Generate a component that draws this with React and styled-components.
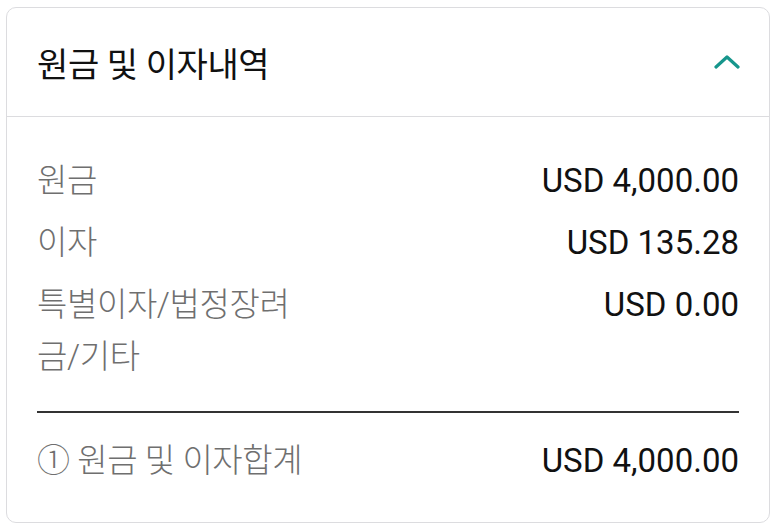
import React from "react";
import styled, { createGlobalStyle } from "styled-components";

const Global = createGlobalStyle`
  html, body { margin: 0; padding: 0; background: #fff; }
  body { font-family: Roboto, "Noto Sans CJK KR", sans-serif; }
`;

const Card = styled.section`
  box-sizing: border-box;
  margin: 7px 0 0 6px;
  width: 764px;
  height: 516px;
  border: 1.5px solid #dcdcdf;
  border-radius: 10px;
  background: #fff;
  overflow: hidden;
`;

const Header = styled.div`
  box-sizing: border-box;
  height: 109px;
  display: flex;
  align-items: center;
  justify-content: space-between;
  padding: 0 29px 0 30px;
  border-bottom: 1.5px solid #dcdcdf;
`;

const Title = styled.h2`
  margin: 0;
  font-size: 34px;
  font-weight: 400;
  color: #111;
  letter-spacing: -0.4px;
`;

const Body = styled.div`
  padding: 38px 30px 0 30px;
`;

const Row = styled.div`
  display: flex;
  justify-content: space-between;
  align-items: flex-start;
  margin-bottom: ${(p) => (p.last ? "0" : "10px")};
`;

const Label = styled.div`
  max-width: 266px;
  font-size: 33px;
  font-weight: 300;
  line-height: 52px;
  color: #6f6f6f;
  letter-spacing: -0.4px;
  word-break: break-all;
`;

const Value = styled.div`
  font-size: 33px;
  line-height: 52px;
  color: #111;
  white-space: nowrap;
`;

const Divider = styled.hr`
  margin: 28px 0 22px;
  border: none;
  height: 1.5px;
  background: #333;
`;

function Chevron() {
  return (
    <svg width="26" height="16" viewBox="0 0 26 16">
      <path
        d="M2 13 L13 3 L24 13"
        fill="none"
        stroke="#16968c"
        strokeWidth="3.2"
        strokeLinecap="round"
        strokeLinejoin="round"
      />
    </svg>
  );
}

const rows = [
  { label: "원금", value: "USD 4,000.00" },
  { label: "이자", value: "USD 135.28" },
  { label: "특별이자/법정장려금/기타", value: "USD 0.00" },
];

export default function App() {
  return (
    <>
      <Global />
      <Card>
        <Header>
          <Title>원금 및 이자내역</Title>
          <Chevron />
        </Header>
        <Body>
          {rows.map((r, i) => (
            <Row key={r.label} last={i === rows.length - 1}>
              <Label>{r.label}</Label>
              <Value>{r.value}</Value>
            </Row>
          ))}
          <Divider />
          <Row last>
            <Label>① 원금 및 이자합계</Label>
            <Value>USD 4,000.00</Value>
          </Row>
        </Body>
      </Card>
    </>
  );
}
